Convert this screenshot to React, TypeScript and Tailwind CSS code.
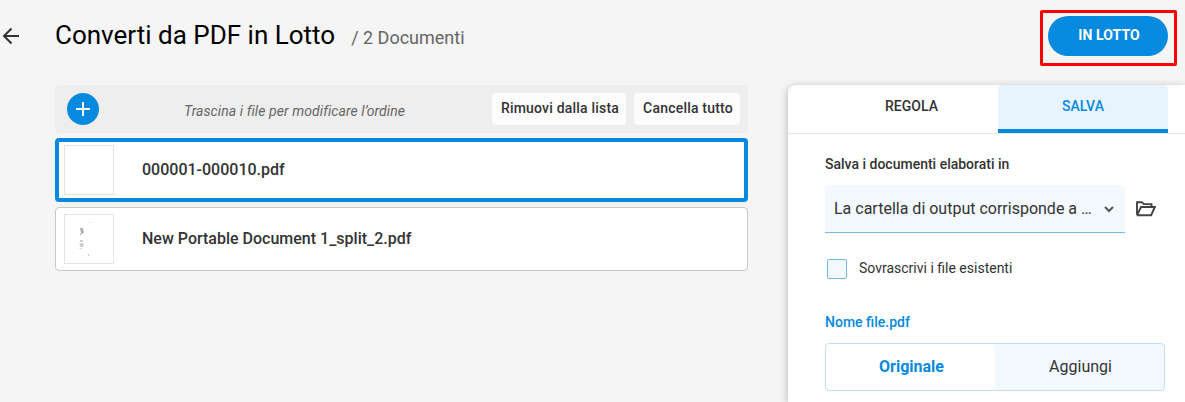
import React, { useState } from 'react';

interface FileItem {
  id: string;
  name: string;
  hasPreview: boolean;
}

const files: FileItem[] = [
  { id: '1', name: '000001-000010.pdf', hasPreview: false },
  { id: '2', name: 'New Portable Document 1_split_2.pdf', hasPreview: true },
];

function BackIcon() {
  return (
    <svg width="18" height="18" viewBox="0 0 18 18" fill="none" stroke="#333" strokeWidth="2">
      <path d="M17 9H2.5M9.5 1.5 2 9l7.5 7.5" />
    </svg>
  );
}

function FolderIcon() {
  return (
    <svg width="20" height="16" viewBox="0 0 20 16" fill="none" stroke="#444" strokeWidth="1.9">
      <path d="M1 14.2V1.2h5l1.8 1.9h7.7v3M1 14.2h14.2L18.8 6H5L1.2 14.2" />
    </svg>
  );
}

function PagePreview() {
  return (
    <svg width="48" height="48" viewBox="0 0 48 48" fill="none" stroke="#b0b0b0">
      <path d="M22 7.500h4" stroke="#ececec" />
      <path d="M15 13.500h3M15.500 14.500h3M15 15.500h3M16 16.500h3M16 17.500h3M15.500 18.500h2M15 19.500h1" />
      <path d="M15 25.500h3M15 26.500h3M14.500 28.500h4M15 29.500h4M14.500 30.500h4M15 31.500h3M14.500 33.500h2" stroke="#d0d0d0" />
      <path d="M23.500 39v2" stroke="#c8c8c8" />
    </svg>
  );
}

function FileRow({ file, selected, onSelect }: { file: FileItem; selected: boolean; onSelect: () => void }) {
  return (
    <div
      onClick={onSelect}
      className={`flex h-16 items-center rounded bg-white ${
        selected ? 'border-4 border-[#058adf] pl-[5px]' : 'border border-[#c8c8c8] pl-2'
      }`}
    >
      <div className="h-[50px] w-[50px] border border-[#e3e3e3]">{file.hasPreview && <PagePreview />}</div>
      <span className="ml-7 text-base font-medium text-[#333]">{file.name}</span>
    </div>
  );
}

export default function App() {
  const [selected, setSelected] = useState('1');
  const [overwrite, setOverwrite] = useState(false);

  return (
    <div className="flex h-[402px] w-[1185px] flex-col overflow-hidden bg-[#f5f5f5] font-['Roboto',sans-serif] text-[#333]">
      <header className="flex h-[85px] shrink-0 items-start">
        <button className="mt-[27px] ml-0.5 w-[53px]" title="Indietro">
          <BackIcon />
        </button>
        <div className="mt-4 flex items-baseline">
          <h1 className="text-[26px] leading-[38px] text-black">Converti da PDF in Lotto</h1>
          <span className="ml-4 text-lg text-[#666]">/ 2 Documenti</span>
        </div>
        <div className="mt-2.5 mr-2 ml-auto h-14 w-[137px] rounded-xs border-3 border-[#ff0000] pt-[3px] pl-[5px]">
          <button className="h-10 w-[120px] rounded-full bg-[#058adf] pb-0.5 pl-0.5 text-sm font-bold tracking-[0.1px] text-white">
            IN LOTTO
          </button>
        </div>
      </header>

      <div className="flex flex-1">
        <main className="ml-[55px] flex w-[693px] flex-col gap-[5px]">
          <div className="flex h-12 items-center rounded bg-[#eee] pr-2 pl-3">
            <button className="flex h-8 w-8 items-center justify-center rounded-full bg-[#058adf]" title="Aggiungi">
              <svg width="14" height="14" viewBox="0 0 14 14" stroke="#fff" strokeWidth="2">
                <path d="M7 0v14M0 7h14" />
              </svg>
            </button>
            <span className="flex-1 pt-1 pr-0.5 text-center text-sm tracking-[0.08px] text-[#666] italic">
              Trascina i file per modificare l’ordine
            </span>
            <div className="flex gap-2">
              <button className="h-8 w-[134px] rounded bg-[#fcfcfc] pb-0.5 pl-0.5 text-sm font-medium tracking-[0.2px]">
                Rimuovi dalla lista
              </button>
              <button className="h-8 w-[106px] rounded bg-[#fcfcfc] pb-0.5 pl-0.5 text-sm font-medium tracking-[0.2px]">
                Cancella tutto
              </button>
            </div>
          </div>
          {files.map((file) => (
            <FileRow key={file.id} file={file} selected={file.id === selected} onSelect={() => setSelected(file.id)} />
          ))}
        </main>

        <aside className="ml-10 flex-1 rounded-tl-lg bg-white shadow-[0_2px_8px_rgba(0,0,0,0.28)]">
          <div className="flex h-[49px] border-b border-[#e4e4e4] pl-10 text-sm font-medium">
            <button className="h-12 w-[170px] pr-[3px] pb-1.5">REGOLA</button>
            <button className="h-12 w-[170px] rounded-t border-b-4 border-[#058adf] bg-[#e7f4fe] pb-0.5 text-[#058adf]">SALVA</button>
          </div>
          <div className="flex flex-col pl-[37px]">
            <h2 className="mt-5 text-sm font-medium">Salva i documenti elaborati in</h2>
            <div className="mt-[11px] flex items-center">
              <div className="flex h-12 w-[300px] items-center justify-between rounded-t border-b border-[#74b9e6] bg-[#f3f9fe] pr-[11px] pl-[9px]">
                <span className="text-base">La cartella di output corrisponde a …</span>
                <svg width="10" height="8" viewBox="0 0 10 8" fill="none" stroke="#555" strokeWidth="2">
                  <path d="m1 2 4 4 4-4" />
                </svg>
              </div>
              <button className="ml-[11px]" title="Sfoglia">
                <FolderIcon />
              </button>
            </div>
            <label className="mt-[26px] flex h-5 items-center pl-0.5">
              <input
                type="checkbox"
                checked={overwrite}
                onChange={() => setOverwrite(!overwrite)}
                className="h-5 w-5 appearance-none rounded-xs border border-[#74b9e6] bg-[#f3f9fe] checked:bg-[#058adf]"
              />
              <span className="ml-3 pb-0.5 text-sm">Sovrascrivi i file esistenti</span>
            </label>
            <h2 className="mt-[33px] text-sm font-medium text-[#058adf]">Nome file.pdf</h2>
            <div className="mt-[11px] flex h-12 w-[340px] overflow-hidden rounded border border-[#bfe1f8] bg-[#f3f9fe] text-base">
              <button className="flex-1 rounded bg-white pl-0.5 font-bold text-[#058adf]">Originale</button>
              <button className="flex-1 pl-0.5">Aggiungi</button>
            </div>
          </div>
        </aside>
      </div>
    </div>
  );
}
